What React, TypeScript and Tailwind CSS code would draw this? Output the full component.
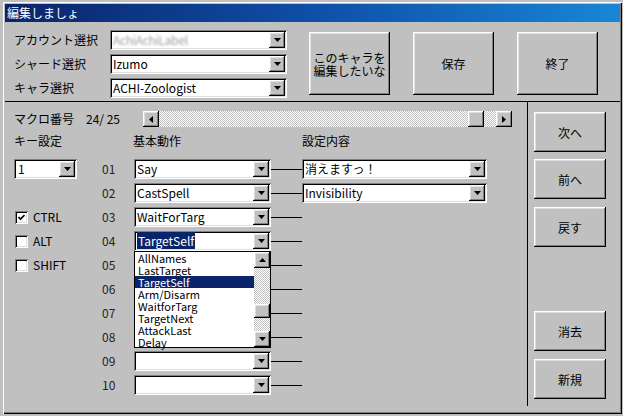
import React from 'react'

const raised =
  'bg-[#c0c0c0] shadow-[inset_-1px_-1px_0_#000,inset_1px_1px_0_#fff,inset_-2px_-2px_0_#808080,inset_2px_2px_0_#dfdfdf]'
const sunken =
  'bg-white shadow-[inset_1px_1px_0_#808080,inset_-1px_-1px_0_#fff,inset_2px_2px_0_#000,inset_-2px_-2px_0_#dfdfdf]'
const dither =
  'bg-[repeating-conic-gradient(#ffffff_0%_25%,#c0c0c0_0%_50%)] bg-[length:2px_2px]'

const Tri = ({ dir }: { dir: 'down' | 'up' | 'left' | 'right' }) => {
  const pts = {
    down: '0,0 7,0 3.5,4',
    up: '0,4 7,4 3.5,0',
    left: '4,0 4,7 0,3.5',
    right: '0,0 0,7 4,3.5'
  }[dir]
  const vert = dir === 'down' || dir === 'up'
  return (
    <svg width={vert ? 7 : 4} height={vert ? 4 : 7} viewBox={vert ? '0 0 7 4' : '0 0 4 7'}>
      <polygon points={pts} fill="#000" />
    </svg>
  )
}

const ArrowBtn = ({ dir = 'down' as 'down' | 'up' | 'left' | 'right' }) => (
  <div className={`${raised} w-[16px] h-[16px] shrink-0 flex items-center justify-center`}>
    <Tri dir={dir} />
  </div>
)

const Combo = ({
  width,
  children
}: {
  width: string
  children?: React.ReactNode
}) => (
  <div className={`${sunken} ${width} h-[20px] shrink-0 flex items-center pl-[3px] pr-[2px]`}>
    <div className="flex-1 min-w-0 whitespace-nowrap leading-[14px]">{children}</div>
    <ArrowBtn />
  </div>
)

const Btn = ({ className, children }: { className: string; children: React.ReactNode }) => (
  <div className={`${raised} ${className} flex items-center justify-center text-center leading-[13px]`}>
    {children}
  </div>
)

const Check = ({ label, checked }: { label: string; checked?: boolean }) => (
  <div className="flex items-center gap-[5px] pl-[1px] leading-[14px]">
    <div className={`${sunken} w-[13px] h-[13px] flex items-center justify-center`}>
      {checked && (
        <svg width="7" height="7" viewBox="0 0 7 7">
          <polyline points="0.5,3 2.5,5 6.5,1" fill="none" stroke="#000" strokeWidth="1.6" />
        </svg>
      )}
    </div>
    <span>{label}</span>
  </div>
)

const actions = ['Say', 'CastSpell', 'WaitForTarg', 'TargetSelf', '', '', '', '', '', '']
const listItems = ['AllNames', 'LastTarget', 'TargetSelf', 'Arm/Disarm', 'WaitforTarg', 'TargetNext', 'AttackLast', 'Delay']

export default function App() {
  return (
    <div
      className="w-[623px] h-[416px] bg-[#c0c0c0] overflow-hidden pl-[3px] pt-[2px] text-[12px] leading-[14px] text-black"
      style={{ fontFamily: '"Noto Sans CJK JP", "Liberation Sans", sans-serif' }}
    >
      <div className="w-[619px] h-[412px] p-[2px] shadow-[inset_1px_1px_0_#fff,inset_-1px_-1px_0_#000,inset_-2px_-2px_0_#808080]">
        {/* title bar */}
        <div className="h-[18px] bg-linear-to-r from-[#0a246a] via-[#0f4fa8] to-[#1a86d6] text-white flex items-center pl-[2px]">
          編集しましょ
        </div>

        {/* top section */}
        <div className="h-[79px] flex">
          <div className="pl-[9px] pt-[8px] flex flex-col gap-[4px]">
            <div className="flex items-center h-[20px]">
              <span className="w-[96px]">アカウント選択</span>
              <Combo width="w-[177px]">
                <span className="text-[#a0a0a0] blur-[0.8px] tracking-tight">AchiAchiLabel</span>
              </Combo>
            </div>
            <div className="flex items-center h-[20px]">
              <span className="w-[96px]">シャード選択</span>
              <Combo width="w-[177px]">Izumo</Combo>
            </div>
            <div className="flex items-center h-[20px]">
              <span className="w-[96px]">キャラ選択</span>
              <Combo width="w-[177px]">ACHI-Zoologist</Combo>
            </div>
          </div>
          <div className="flex gap-[23px] pl-[22px] pt-[10px]">
            <Btn className="w-[81px] h-[63px]">
              このキャラを
              <br />
              編集したいな
            </Btn>
            <Btn className="w-[81px] h-[63px]">保存</Btn>
            <Btn className="w-[81px] h-[63px]">終了</Btn>
          </div>
        </div>

        <div className="h-[1px] bg-black" />

        {/* bottom section */}
        <div className="flex h-[304px]">
          <div className="w-[522px] pl-[9px] flex flex-col">
            {/* macro number + scrollbar */}
            <div className="flex items-center h-[16px] mt-[9px]">
              <span className="w-[72px]">マクロ番号</span>
              <span className="w-[57px]">24/ 25</span>
              <div className="flex w-[369px] h-[16px]">
                <ArrowBtn dir="left" />
                <div className={`flex-1 ${dither}`} />
                <div className={`${raised} w-[16px] h-[16px]`} />
                <div className={`w-[12px] ${dither}`} />
                <ArrowBtn dir="right" />
              </div>
            </div>

            {/* headings */}
            <div className="flex items-center h-[16px] mt-[6px]">
              <span className="w-[119px]">キー設定</span>
              <span className="w-[169px]">基本動作</span>
              <span>設定内容</span>
            </div>

            {/* rows */}
            <div className="relative mt-[10px] flex flex-col gap-[4px]">
              {actions.map((a, i) => (
                <div key={i} className="flex items-center h-[20px]">
                  <div className="w-[88px] flex items-center">
                    {i === 0 && (
                      <Combo width="w-[63px]">
                        <span className="pl-[1px]">1</span>
                      </Combo>
                    )}
                    {i === 2 && <Check label="CTRL" checked />}
                    {i === 3 && <Check label="ALT" />}
                    {i === 4 && <Check label="SHIFT" />}
                  </div>
                  <span className="w-[32px] text-[#222]">{String(i + 1).padStart(2, '0')}</span>
                  <Combo width="w-[137px]">
                    {i === 3 ? <span className="bg-[#0a246a] text-white px-[1px]">{a}</span> : a}
                  </Combo>
                  <div className="w-[31px] h-[1px] bg-black" />
                  {i === 0 && <Combo width="w-[185px]">消えますっ！</Combo>}
                  {i === 1 && <Combo width="w-[185px]">Invisibility</Combo>}
                </div>
              ))}

              {/* open dropdown list */}
              <div className="absolute left-[120px] top-[92px] w-[137px] h-[97px] bg-white border border-black flex">
                <div className="flex-1 flex flex-col">
                  {listItems.map((it) => (
                    <div
                      key={it}
                      className={`h-[12px] leading-[12px] text-[11px] pl-[3px] whitespace-nowrap ${it === 'TargetSelf' ? 'bg-[#0a246a] text-white' : ''}`}
                    >
                      {it}
                    </div>
                  ))}
                </div>
                <div className="w-[16px] flex flex-col">
                  <ArrowBtn dir="up" />
                  <div className={`h-[36px] ${dither}`} />
                  <div className={`${raised} w-[16px] h-[14px]`} />
                  <div className={`flex-1 ${dither}`} />
                  <ArrowBtn dir="down" />
                </div>
              </div>
            </div>
          </div>

          <div className="w-[1px] bg-black" />

          {/* right column */}
          <div className="pl-[6px] pt-[10px] flex flex-col">
            <Btn className="w-[72px] h-[40px]">次へ</Btn>
            <Btn className="w-[72px] h-[40px] mt-[7px]">前へ</Btn>
            <Btn className="w-[72px] h-[40px] mt-[8px]">戻す</Btn>
            <Btn className="w-[72px] h-[40px] mt-[64px]">消去</Btn>
            <Btn className="w-[72px] h-[40px] mt-[8px]">新規</Btn>
          </div>
        </div>
      </div>
    </div>
  )
}
